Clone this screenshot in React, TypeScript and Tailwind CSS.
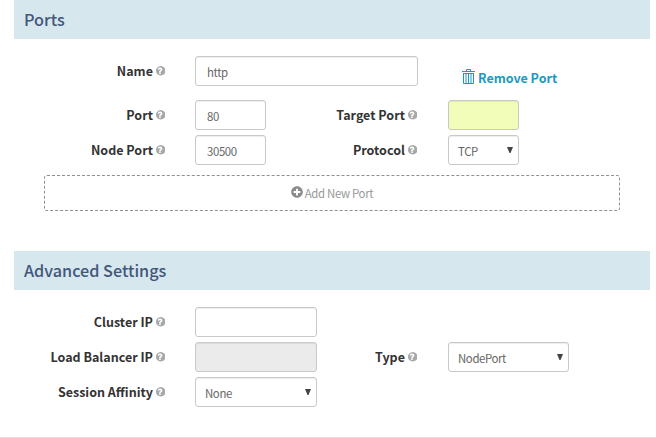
import type { ReactNode } from "react";
import { FaPlusCircle } from "react-icons/fa";

function SectionHeader({ children }: { children: ReactNode }) {
  return (
    <h2 className="flex h-[39px] items-center bg-[#d6e7ed] pb-[2px] pl-[10px] text-[16.2px] leading-5 font-medium text-[#42567a]">
      {children}
    </h2>
  );
}

function HelpIcon() {
  return (
    <svg viewBox="128 128 1536 1536" className="size-[9.5px] fill-[#a8a8a8]">
      <path d="M896 1376v-192q0-14-9-23t-23-9h-192q-14 0-23 9t-9 23v192q0 14 9 23t23 9h192q14 0 23-9t9-23zm256-672q0-88-55.5-163t-138.5-116-170-41q-243 0-371 213-15 24 8 42l132 100q7 6 19 6 16 0 25-12 53-68 86-92 34-24 86-24 48 0 85.500 26t37.500 59q0 38-20 61t-68 45q-63 28-115.500 86.500t-52.500 125.500v36q0 14 9 23t23 9h192q14 0 23-9t9-23q0-19 21.500-49.500t54.500-49.500q32-18 49-28.500t46-35 44.500-48 28-60.500 12.500-81zm512 192q0 209-103 385.500t-279.500 279.500-385.500 103-385.500-103-279.500-279.500-103-385.500 103-385.500 279.500-279.500 385.500-103 385.500 103 279.500 279.500 103 385.500z" />
    </svg>
  );
}

function Label({ text, className }: { text: string; className: string }) {
  return (
    <label className={`flex shrink-0 items-center justify-end gap-[2.6px] whitespace-nowrap ${className}`}>
      <span className="text-[12.5px] leading-5 font-bold text-[#333333]">{text}</span>
      <HelpIcon />
    </label>
  );
}

const field =
  "h-[30px] shrink-0 rounded-[3px] border border-[#c9c9c9] text-[11.4px] leading-5 tracking-[-0.38px] text-[#666666] outline-none shadow-[inset_0_1px_1px_rgba(0,0,0,0.075)]";

function TextInput({ value = "", className }: { value?: string; className: string }) {
  return <input defaultValue={value} className={`${field} pt-px pl-[11px] ${className}`} />;
}

function Select({ value, className }: { value: string; className: string }) {
  return (
    <div className={`${field} flex items-center justify-between bg-white pr-[5px] pl-[9px] ${className}`}>
      <span className="pt-px">{value}</span>
      <svg viewBox="0 0 6 6" className="mb-px size-[6px] fill-[#444444]">
        <path d="M0 0h6L3.5 6h-1z" />
      </svg>
    </div>
  );
}

function TrashIcon() {
  return (
    <svg viewBox="0 0 13 15" className="h-[15px] w-[13px] fill-none stroke-[#1a9bbd]">
      <path d="M4.5 2V.5h4V2M0 2.5h13M1.5 4.5h10M1.5 4v10.5h10V4M4 5v9M6.500 5v9M9 5v9" />
    </svg>
  );
}

export default function App() {
  return (
    <div className="h-[438px] w-[656px] overflow-hidden border-b border-[#e3e3e3] bg-white pr-[6px] pl-[14px] font-['Noto_Sans_CJK_SC',sans-serif]">
      <SectionHeader>Ports</SectionHeader>
      <div className="mt-[17px] flex h-[30px]">
        <Label text="Name" className="w-[151px]" />
        <TextInput value="http" className="ml-[30px] w-[223px]" />
        <a className="mt-[12px] ml-[44px] flex h-5 items-center gap-[3px] text-[12.5px] leading-5 font-bold whitespace-nowrap text-[#1a9bbd]">
          <span className="-mt-[3px]"><TrashIcon /></span>
          Remove Port
        </a>
      </div>
      <div className="mt-[14px] flex h-[30px]">
        <Label text="Port" className="w-[151px]" />
        <TextInput value="80" className="ml-[30px] w-[71px]" />
        <Label text="Target Port" className="w-[151px]" />
        <TextInput className="ml-[31px] w-[71px] bg-[#f2fdb9]" />
      </div>
      <div className="mt-[5px] flex h-[30px]">
        <Label text="Node Port" className="w-[151px]" />
        <TextInput value="30500" className="ml-[30px] w-[71px]" />
        <Label text="Protocol" className="w-[151px]" />
        <Select value="TCP" className="ml-[31px] w-[71px]" />
      </div>
      <button className="mt-[10px] ml-[30px] flex h-[36px] w-[576px] items-center justify-center gap-[2px] rounded-[3px] border border-dashed border-[#909090] text-[11.4px] leading-5 tracking-[-0.32px] text-[#999999]">
        <FaPlusCircle className="-mt-[1.5px] size-[12px] text-[#8c8c8c]" />
        Add New Port
      </button>
      <div className="mt-[40px]">
        <SectionHeader>Advanced Settings</SectionHeader>
      </div>
      <div className="mt-[17px] flex h-[30px]">
        <Label text="Cluster IP" className="w-[151px]" />
        <TextInput className="ml-[30px] w-[122px]" />
      </div>
      <div className="mt-[5px] flex h-[30px]">
        <Label text="Load Balancer IP" className="w-[151px]" />
        <TextInput className="ml-[30px] w-[122px] bg-[#ebebeb]" />
        <Label text="Type" className="w-[100px]" />
        <Select value="NodePort" className="ml-[31px] w-[121px]" />
      </div>
      <div className="mt-[5px] flex h-[30px]">
        <Label text="Session Affinity" className="w-[151px]" />
        <Select value="None" className="ml-[30px] w-[122px]" />
      </div>
    </div>
  );
}
